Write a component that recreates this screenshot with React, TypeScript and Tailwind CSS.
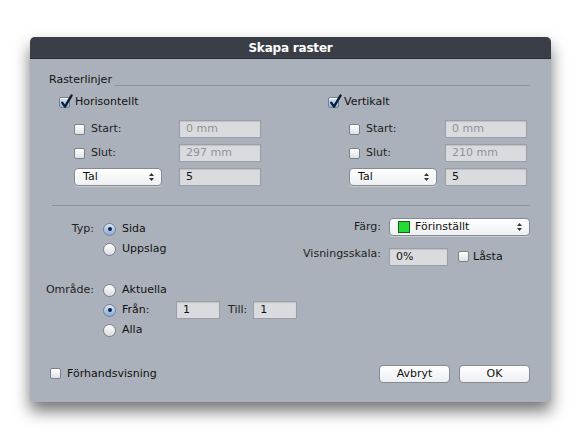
import React from "react";

const font = { fontFamily: '"DejaVu Sans", "Noto Sans", sans-serif' };

function Checkbox({ checked }: { checked?: boolean }) {
  return (
    <span
      className={`relative inline-block w-[11px] h-[11px] shrink-0 rounded-[2px] border border-[#7b8089] shadow-[inset_0_1px_0_#ffffff] ${
        checked
          ? "bg-gradient-to-b from-[#dbe8f7] to-[#8fb3de]"
          : "bg-gradient-to-b from-[#ffffff] to-[#dfe1e5]"
      }`}
    >
      {checked && (
        <svg
          className="absolute left-[0px] top-[-4px]"
          width="13"
          height="15"
          viewBox="0 0 13 15"
        >
          <path
            d="M2.2 8.6 L5 12.6 L11.6 1.4"
            stroke="#0c1b36"
            strokeWidth="2.3"
            fill="none"
            strokeLinecap="round"
            strokeLinejoin="round"
          />
        </svg>
      )}
    </span>
  );
}

function Radio({ checked }: { checked?: boolean }) {
  return (
    <span
      className={`flex items-center justify-center w-[13px] h-[13px] shrink-0 rounded-full border border-[#7b8089] ${
        checked
          ? "bg-gradient-to-b from-[#d6e6f8] to-[#84acdb]"
          : "bg-gradient-to-b from-[#ffffff] to-[#dcdee2]"
      }`}
    >
      {checked && <span className="w-[4px] h-[4px] rounded-full bg-[#102241]" />}
    </span>
  );
}

function Arrows() {
  return (
    <svg width="5" height="8" viewBox="0 0 5 8" className="shrink-0">
      <path d="M2.5 0 L5 3 L0 3 Z" fill="#333" />
      <path d="M2.5 8 L5 5 L0 5 Z" fill="#333" />
    </svg>
  );
}

function Select({ width, children }: { width: string; children: React.ReactNode }) {
  return (
    <div
      className={`${width} h-[18px] flex items-center justify-between pl-[8px] pr-[7px] rounded-[4px] border border-[#858a93] bg-gradient-to-b from-[#ffffff] to-[#eef0f2] shadow-[0_1px_0_rgba(255,255,255,0.35)] text-[11px] text-[#111]`}
    >
      <div className="flex items-center">{children}</div>
      <Arrows />
    </div>
  );
}

function Field({
  width,
  value,
  disabled,
}: {
  width: string;
  value: string;
  disabled?: boolean;
}) {
  return (
    <div
      className={`${width} h-[18px] flex items-center px-[6px] border border-[#9a9ea6] bg-[#d9dbdf] text-[11px] shadow-[inset_0_1px_1px_rgba(0,0,0,0.12)] ${
        disabled ? "text-[#8f9298]" : "text-[#111]"
      }`}
    >
      {value}
    </div>
  );
}

function GridColumn({
  title,
  subPad,
  labelW,
  endValue,
}: {
  title: string;
  subPad: string;
  labelW: string;
  endValue: string;
}) {
  return (
    <div className="flex flex-col">
      <div className="h-[14px] flex items-center gap-[5px]">
        <Checkbox checked />
        <span className="text-[11px] text-[#111]">{title}</span>
      </div>
      <div className={`flex flex-col gap-[6px] mt-[11px] ${subPad}`}>
        <div className="flex items-center h-[18px]">
          <div className={`${labelW} flex items-center gap-[6px]`}>
            <Checkbox />
            <span className="text-[11px] text-[#222]">Start:</span>
          </div>
          <Field width="w-[82px]" value="0 mm" disabled />
        </div>
        <div className="flex items-center h-[18px]">
          <div className={`${labelW} flex items-center gap-[6px]`}>
            <Checkbox />
            <span className="text-[11px] text-[#222]">Slut:</span>
          </div>
          <Field width="w-[82px]" value={endValue} disabled />
        </div>
        <div className="flex items-center h-[18px]">
          <div className={`${labelW} flex items-center`}>
            <Select width="w-[88px]">Tal</Select>
          </div>
          <Field width="w-[82px]" value="5" />
        </div>
      </div>
    </div>
  );
}

function RadioRow({ checked, label }: { checked?: boolean; label: string }) {
  return (
    <div className="h-[20px] flex items-center gap-[6px]">
      <Radio checked={checked} />
      <span className="text-[11px] text-[#111]">{label}</span>
    </div>
  );
}

export default function App() {
  return (
    <div className="w-[582px] h-[438px] bg-white pt-[37px] pl-[30px] overflow-hidden" style={font}>
      <div className="w-[521px] h-[365px] flex flex-col rounded-t-[5px] rounded-b-[3px] bg-[#abb1bb] shadow-[0_9px_16px_rgba(0,0,0,0.55)]">
        <div className="h-[22px] shrink-0 flex items-center justify-center rounded-t-[5px] bg-[#3a3e46] border-b border-[#2a2d33] text-white text-[12px] font-bold tracking-[-0.2px]">
          Skapa raster
        </div>

        <div className="flex-1 flex flex-col pl-[19px] pr-[21px]">
          {/* Rasterlinjer header */}
          <div className="mt-[14px] h-[14px] flex">
            <span className="text-[11px] leading-[14px] text-[#111]">Rasterlinjer</span>
            <div className="flex-1 self-end mb-[1px] ml-[3px] h-px bg-[#8d939c]" />
          </div>

          <div className="mt-[8px] flex pl-[10px]">
            <div className="w-[269px]">
              <GridColumn
                title="Horisontellt"
                subPad="pl-[15px]"
                labelW="w-[105px]"
                endValue="297 mm"
              />
            </div>
            <div>
              <GridColumn
                title="Vertikalt"
                subPad="pl-[21px]"
                labelW="w-[96px]"
                endValue="210 mm"
              />
            </div>
          </div>

          <div className="mt-[19px] ml-[3px] h-px bg-[#8d939c]" />

          <div className="flex">
            {/* left: Typ / Område */}
            <div className="flex flex-col mt-[13px]">
              <div className="flex">
                <div className="w-[45px] h-[20px] flex items-center justify-end text-[11px] text-[#222]">
                  Typ:
                </div>
                <div className="ml-[9px] flex flex-col">
                  <RadioRow checked label="Sida" />
                  <RadioRow label="Uppslag" />
                </div>
              </div>
              <div className="flex mt-[21px]">
                <div className="w-[45px] h-[20px] flex items-center justify-end text-[11px] text-[#222]">
                  Område:
                </div>
                <div className="ml-[9px] flex flex-col">
                  <RadioRow label="Aktuella" />
                  <div className="h-[20px] flex items-center">
                    <div className="w-[73px] flex items-center gap-[6px]">
                      <Radio checked />
                      <span className="text-[11px] text-[#111]">Från:</span>
                    </div>
                    <Field width="w-[44px]" value="1" />
                    <span className="ml-[8px] text-[11px] text-[#222]">Till:</span>
                    <div className="ml-[6px]">
                      <Field width="w-[44px]" value="1" />
                    </div>
                  </div>
                  <RadioRow label="Alla" />
                </div>
              </div>
            </div>

            {/* right: Färg / Visningsskala */}
            <div className="ml-auto mt-[12px] grid grid-cols-[76px_141px] gap-x-[8px] gap-y-[9px] content-start">
              <div className="h-[18px] flex items-center justify-end text-[11px] text-[#222]">Färg:</div>
              <Select width="w-[141px]">
                <span className="w-[12px] h-[12px] bg-[#22dd33] border border-[#1f5a22] mr-[5px]" />
                <span>Förinställt</span>
              </Select>
              <div className="h-[18px] flex items-center justify-end text-[11px] text-[#222]">
                Visningsskala:
              </div>
              <div className="flex items-center">
                <Field width="w-[59px]" value="0%" />
                <span className="ml-[10px]">
                  <Checkbox />
                </span>
                <span className="ml-[4px] text-[11px] text-[#111]">Låsta</span>
              </div>
            </div>
          </div>

          {/* bottom row */}
          <div className="mt-auto mb-[19px] h-[18px] flex items-center">
            <span className="ml-[1px]">
              <Checkbox />
            </span>
            <span className="ml-[6px] text-[11px] text-[#111]">Förhandsvisning</span>
            <div className="ml-auto flex gap-[9px]">
              <button className="w-[71px] h-[18px] rounded-[4px] border border-[#858a93] bg-gradient-to-b from-[#ffffff] to-[#eceef0] text-[11px] text-[#111]">
                Avbryt
              </button>
              <button className="w-[71px] h-[18px] rounded-[4px] border border-[#858a93] bg-gradient-to-b from-[#ffffff] to-[#eceef0] text-[11px] text-[#111]">
                OK
              </button>
            </div>
          </div>
        </div>
      </div>
    </div>
  );
}
